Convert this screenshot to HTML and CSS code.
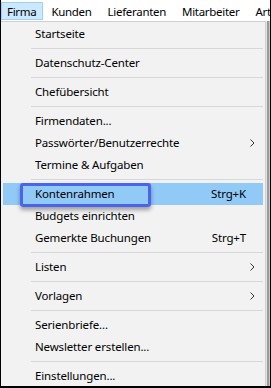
FILE: index.html
```html
<!DOCTYPE html>
<html lang="de">
<head>
    <meta charset="UTF-8">
    <meta name="viewport" content="width=device-width, initial-scale=1.0">
    <title>Firma Menü</title>
    <link rel="stylesheet" href="styles.css">
</head>
<body>
    <div class="frame">
        <div class="menubar">
            <span class="bar-item active">Firma</span>
            <span class="bar-item">Kunden</span>
            <span class="bar-item">Lieferanten</span>
            <span class="bar-item">Mitarbeiter</span>
            <span class="bar-item">Arti</span>
        </div>
        <div class="below">
            <div class="dropdown">
                <div class="item">Startseite</div>
                <div class="sep"></div>
                <div class="item">Datenschutz-Center</div>
                <div class="sep"></div>
                <div class="item">Chefübersicht</div>
                <div class="sep"></div>
                <div class="item">Firmendaten...</div>
                <div class="item">Passwörter/Benutzerrechte<svg class="arrow" width="5" height="8" viewBox="0 0 5 8"><polyline points="0.5,0.5 4,4 0.5,7.5" fill="none" stroke="#333" stroke-width="1"/></svg></div>
                <div class="item">Termine &amp; Aufgaben</div>
                <div class="sep"></div>
                <div class="item selected">Kontenrahmen<span class="key">Strg+K</span><span class="mark"></span></div>
                <div class="item">Budgets einrichten</div>
                <div class="item">Gemerkte Buchungen<span class="key">Strg+T</span></div>
                <div class="sep"></div>
                <div class="item">Listen<svg class="arrow" width="5" height="8" viewBox="0 0 5 8"><polyline points="0.5,0.5 4,4 0.5,7.5" fill="none" stroke="#333" stroke-width="1"/></svg></div>
                <div class="sep"></div>
                <div class="item">Vorlagen<svg class="arrow" width="5" height="8" viewBox="0 0 5 8"><polyline points="0.5,0.5 4,4 0.5,7.5" fill="none" stroke="#333" stroke-width="1"/></svg></div>
                <div class="sep"></div>
                <div class="item">Serienbriefe...</div>
                <div class="item">Newsletter erstellen...</div>
                <div class="sep"></div>
                <div class="item">Einstellungen...</div>
            </div>
            <div class="behind"></div>
        </div>
    </div>
</body>
</html>
```

FILE: styles.css
```css
body {
    margin: 0;
    font-family: "Noto Sans", Arial, sans-serif;
    font-size: 11.5px;
    letter-spacing: -0.15px;
    color: #000;
    background: #fff;
}
.frame {
    width: 271px;
    height: 388px;
    box-sizing: border-box;
    border: 1px solid #000;
    border-top: none;
    border-bottom-width: 2px;
    overflow: hidden;
    display: flex;
    flex-direction: column;
}
.menubar {
    height: 21px;
    flex: none;
    display: flex;
    align-items: center;
    white-space: nowrap;
    overflow: hidden;
    background: #fff;
    letter-spacing: -0.3px;
}
.bar-item {
    height: 18px;
    line-height: 17px;
    padding: 0 7px;
    border: 1px solid transparent;
    box-sizing: border-box;
    flex: none;
}
.bar-item.active {
    background: #cce8ff;
    border-color: #99d1ff;
    padding: 0 6px 0 5px;
}
.below {
    flex: 1;
    display: flex;
    min-height: 0;
}
.dropdown {
    width: 265px;
    flex: none;
    box-sizing: border-box;
    background: #f2f2f2;
    border-top: 1px solid #cfcfcf;
    border-right: 1px solid #cfcfcf;
    padding: 1px 2px 0 2px;
}
.item {
    position: relative;
    height: 22px;
    line-height: 22px;
    padding-left: 32px;
    white-space: nowrap;
}
.item.selected {
    background: #91c9f7;
}
.key {
    position: absolute;
    right: 17px;
}
.arrow {
    position: absolute;
    right: 8px;
    top: 7px;
}
.mark {
    position: absolute;
    left: 17px;
    top: 0;
    width: 131px;
    height: 24px;
    box-sizing: border-box;
    border: 3px solid #4a64ec;
    border-radius: 3px;
    box-shadow: 0 3px 4px rgba(0, 0, 0, 0.35);
}
.sep {
    height: 7px;
    margin-left: 28px;
    position: relative;
}
.sep::after {
    content: "";
    position: absolute;
    left: 0;
    right: 0;
    top: 3px;
    border-top: 1px solid #d7d7d7;
}
.behind {
    flex: 1;
    background: linear-gradient(to right, #e4e4e4 0 1px, #9a9a9a 1px 3px, #c8c8c8 3px);
}
```
